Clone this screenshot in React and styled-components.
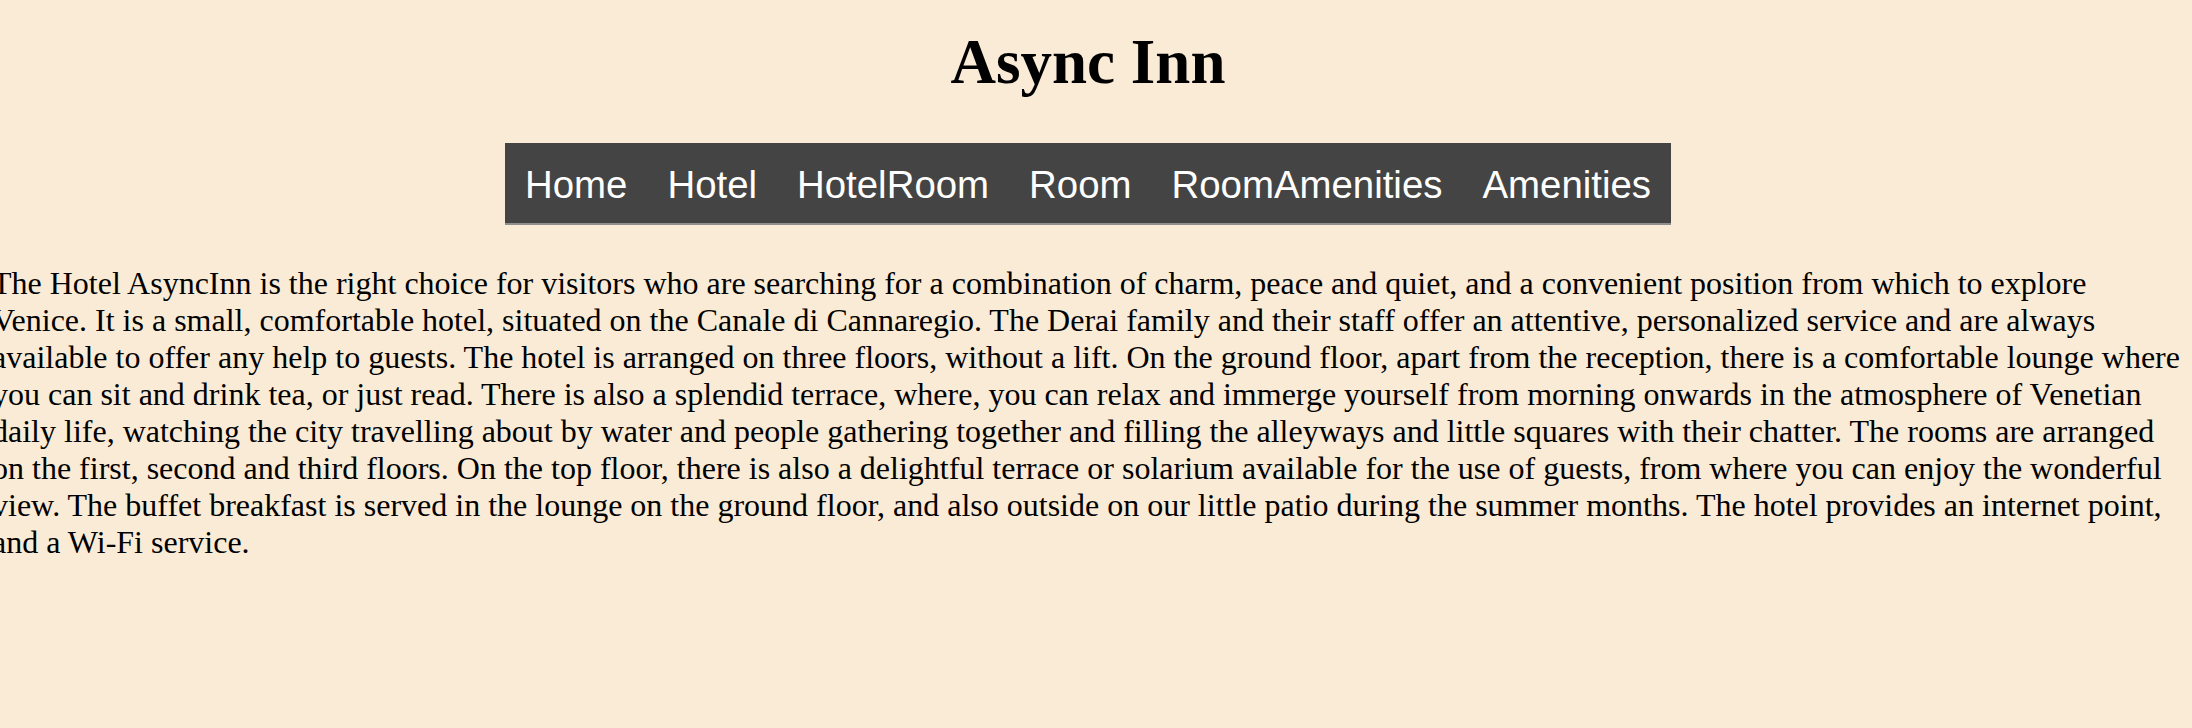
import React from "react";
import styled, { createGlobalStyle } from "styled-components";

const GlobalStyle = createGlobalStyle`
  html, body {
    margin: 0;
    padding: 0;
    background: #faebd7;
  }
  body {
    font-family: "Liberation Serif", "Times New Roman", serif;
    color: #000;
    overflow-x: hidden;
  }
`;

const Page = styled.div`
  box-sizing: border-box;
  width: 100%;
  padding-right: 16px;
`;

const Header = styled.header`
  display: flex;
  flex-direction: column;
  align-items: center;
`;

const Title = styled.h1`
  margin: 26px 0 44px;
  font-family: "Liberation Serif", "Times New Roman", serif;
  font-size: 63px;
  font-weight: bold;
  line-height: normal;
`;

const Nav = styled.nav`
  display: flex;
  background: #444444;
  border-bottom: 2px solid #8f8f8f;
  padding: 20px 0 16px;
`;

const NavLink = styled.a`
  padding: 0 20px;
  color: #ffffff;
  text-decoration: none;
  font-family: "Liberation Sans", Arial, sans-serif;
  font-size: 38.4px;
  line-height: normal;
`;

const Intro = styled.p`
  margin: 40px -8px 0;
  font-family: "Liberation Serif", "Times New Roman", serif;
  font-size: 32px;
  line-height: normal;
`;

const links = ["Home", "Hotel", "HotelRoom", "Room", "RoomAmenities", "Amenities"];

export default function App() {
  return (
    <Page>
      <GlobalStyle />
      <Header>
        <Title>Async Inn</Title>
        <Nav>
          {links.map((l) => (
            <NavLink key={l} href="#">
              {l}
            </NavLink>
          ))}
        </Nav>
      </Header>
      <Intro>
        The Hotel AsyncInn is the right choice for visitors who are searching for a combination of charm, peace and quiet, and a convenient position from which to explore Venice. It is a small, comfortable hotel, situated on the Canale di Cannaregio. The Derai family and their staff offer an attentive, personalized service and are always available to offer any help to guests. The hotel is arranged on three floors, without a lift. On the ground floor, apart from the reception, there is a comfortable lounge where you can sit and drink tea, or just read. There is also a splendid terrace, where, you can relax and immerge yourself from morning onwards in the atmosphere of Venetian daily life, watching the city travelling about by water and people gathering together and filling the alleyways and little squares with their chatter. The rooms are arranged on the first, second and third floors. On the top floor, there is also a delightful terrace or solarium available for the use of guests, from where you can enjoy the wonderful view. The buffet breakfast is served in the lounge on the ground floor, and also outside on our little patio during the summer months. The hotel provides an internet point, and a Wi-Fi service.
      </Intro>
    </Page>
  );
}
